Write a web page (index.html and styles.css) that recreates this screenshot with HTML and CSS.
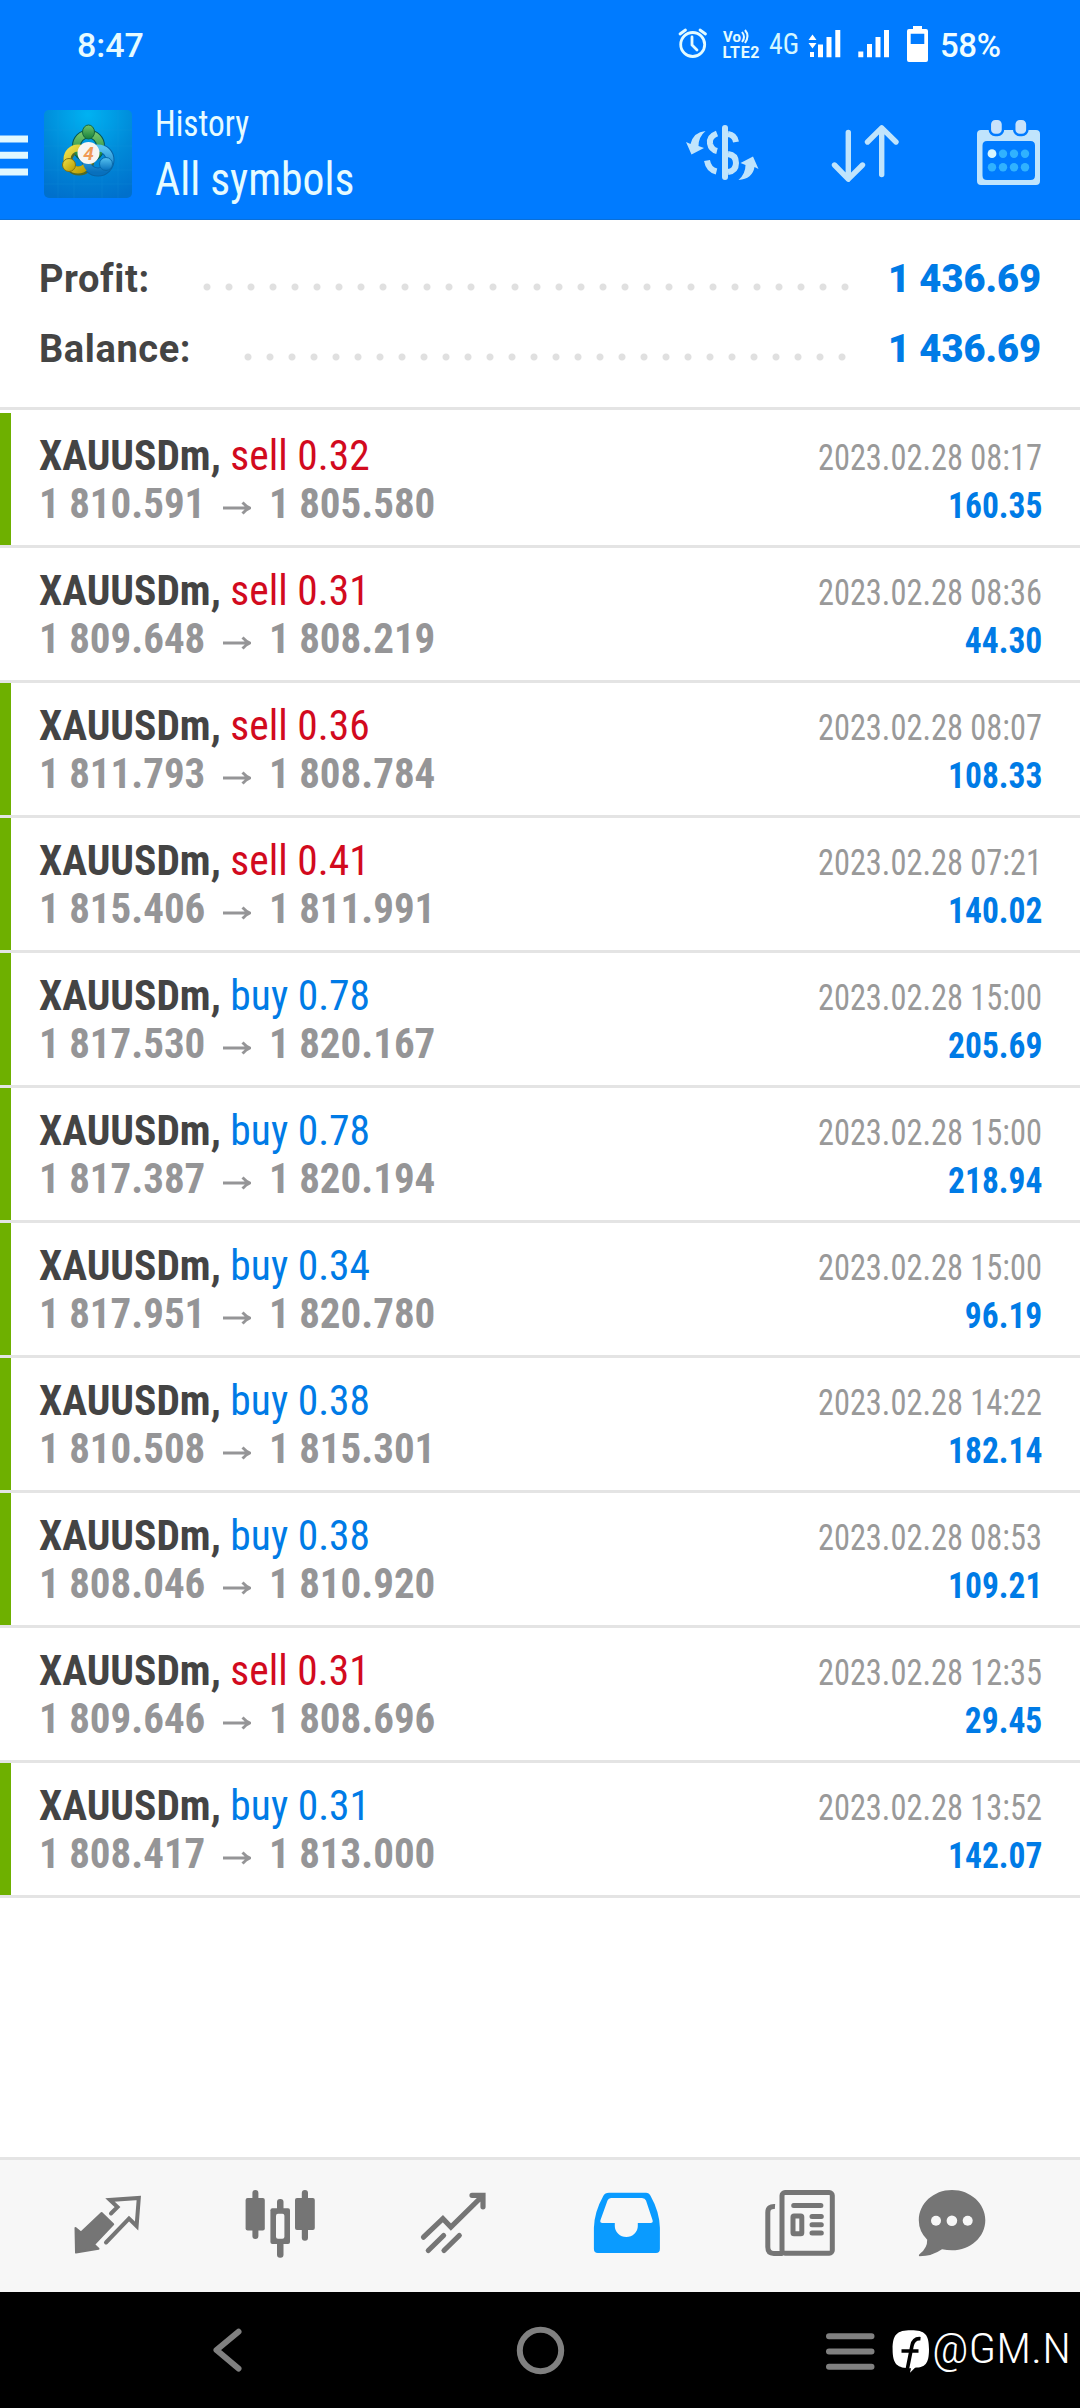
FILE: index.html
```html
<!DOCTYPE html>
<html lang="en">
<head>
<meta charset="utf-8">
<title>History</title>
<link rel="stylesheet" href="styles.css">
</head>
<body>
<header class="top">
  <div class="status">
    <span class="clock">8:47</span>
    <svg class="status-icons" viewBox="676 20 340 50" width="340" height="50">
      <g fill="none" stroke="#e4fbff" stroke-width="2.8" stroke-linecap="round">
        <circle cx="694.7" cy="44.5" r="12"/>
        <path d="M694 37v8l5 5M682 34l5.500-4M702 30l5.500 4"/>
      </g>
      <text x="725" y="42" font-size="15" font-weight="700" textLength="18" fill="#e4fbff">Vo</text>
      <path d="M744 32q4 5 0 10M747 30q5 6 0 13" fill="none" stroke="#e4fbff" stroke-width="2"/>
      <text x="724.500" y="57.500" font-size="16" font-weight="700" textLength="37" fill="#e4fbff">LTE2</text>
      <text class="cond" x="771" y="54" font-size="29" textLength="30" lengthAdjust="spacingAndGlyphs" fill="#d4f6ff">4G</text>
      <g fill="#fff">
        <path d="M810.500 40l4-5.500 4 5.500zM810.500 43l4 5.500 4-5.500zM812 52h4v5h-4zM820 44.500h5v12.800h-5zM828.500 37h5v20.300h-5zM837.300 30h5v27.300h-5z"/>
        <path d="M860.300 51.500h5v5.800h-5zM869 44h5v13.300h-5zM877.500 37h5v20.300h-5zM886 30h5v27.300h-5z"/>
        <path fill-rule="evenodd" d="M915 26h9v3h4q2 0 2 2v29q0 2-2 2h-17q-2 0-2-2v-29q0-2 2-2h4zM912.700 33.700v10.300h13.600v-10.300z"/>
      </g>
      <text x="942" y="57" font-size="33" font-weight="500" textLength="61" fill="#f0fdff">58%</text>
    </svg>
  </div>
  <div class="appbar">
    <svg class="burger" viewBox="0 0 28 42" width="28" height="42"><path d="M0 4h28M0 20.300h28M0 37h28" stroke="#e0f8ff" stroke-width="7"/></svg>
    <svg class="logo" viewBox="0 0 88 88" width="88" height="88">
      <defs>
        <radialGradient id="sky" cx=".5" cy=".05" r="1"><stop offset="0" stop-color="#00b2f2"/><stop offset=".55" stop-color="#0089d8"/><stop offset="1" stop-color="#0070cc"/></radialGradient>
        <linearGradient id="gr" x2="0" y2="1"><stop offset="0" stop-color="#72c46a"/><stop offset="1" stop-color="#14803c"/></linearGradient>
        <linearGradient id="ye" x2="1" y2="1"><stop offset="0" stop-color="#eee04a"/><stop offset="1" stop-color="#b79a00"/></linearGradient>
        <linearGradient id="bl" x2="0" y2="1"><stop offset="0" stop-color="#56c2f0"/><stop offset="1" stop-color="#0870bd"/></linearGradient>
      </defs>
      <rect width="88" height="88" rx="5" fill="url(#sky)"/>
      <path d="M14 0v88M30 0v88M58 0v88M74 0v88M0 20h88M0 36h88M0 60h88M0 74h88" stroke="#20a8ee" stroke-opacity=".15"/>
      <circle cx="44.500" cy="36" r="12" fill="none" stroke="#075650" stroke-width="9"/>
      <circle cx="35" cy="50" r="11" fill="none" stroke="#516a25" stroke-width="9"/>
      <circle cx="54" cy="50" r="12" fill="none" stroke="#0763a7" stroke-width="9"/>
      <circle cx="44.500" cy="36" r="12" fill="none" stroke="url(#gr)" stroke-width="7"/>
      <circle cx="34" cy="49" r="11" fill="none" stroke="url(#ye)" stroke-width="7"/>
      <circle cx="54" cy="50" r="12" fill="none" stroke="url(#bl)" stroke-width="7"/>
      <ellipse cx="44.500" cy="22" rx="6" ry="7" fill="url(#gr)" stroke="#17673c"/>
      <circle cx="25" cy="55" r="6.500" fill="url(#ye)" stroke="#827111"/>
      <circle cx="62" cy="54" r="6.500" fill="url(#bl)" stroke="#0869aa"/>
      <circle cx="44.500" cy="43" r="11" fill="#f7f5f2"/>
      <text x="44.500" y="50" font-size="19" font-weight="700" font-style="italic" text-anchor="middle" fill="#f09a56">4</text>
    </svg>
    <div class="titles">
      <div class="sub">History</div>
      <div class="main">All symbols</div>
    </div>
    <svg class="actions" viewBox="680 110 370 84" width="370" height="84">
      <g fill="none" stroke="#c0e4fc" stroke-width="6">
        <path d="M725 128v49" stroke-linecap="round"/>
        <path d="M717 133.500q-8 3-7 10 1 6 7 7.500M728 134q7 1 8 8M707 160.500q1.500 9 9.500 11M728 154q8 1 8 9t-8 9"/>
      </g>
      <path fill="#c0e4fc" d="M705.500 131q-12 1-15 13l-4.500-2 5.500 12.500 12.500-6.500-5.500-2q0-9 7-15zM738.500 180q14-1 16-13l4 2-5.500-12.500-12.500 6.500 5 2q0 9-7 15z"/>
      <g fill="none" stroke="#c0e4fc" stroke-width="5.400" stroke-linecap="round" stroke-linejoin="round">
        <path d="M848.300 132.500v46.500M834.500 165l13.800 14.200L862.500 165M881.700 174.500v-46.500M867.500 142l14.200-14.200L896 142"/>
      </g>
      <path fill="#c0e4fc" fill-rule="evenodd" d="M981 130h55q4 0 4 4v47q0 4-4 4h-55q-4 0-4-4v-47q0-4 4-4zM987 141q-4.500 0-4.500 4.500v30q0 4.500 4.500 4.500h43.500q4.500 0 4.500-4.500v-30q0-4.500-4.500-4.500z"/>
      <g fill="#c8e2fb" stroke="#007bff" stroke-width="2.500"><rect x="989.800" y="118.700" width="13.200" height="16.400" rx="5.500"/><rect x="1014.200" y="118.700" width="13.200" height="16.400" rx="5.500"/></g>
      <g fill="#30b2ff"><circle cx="1003" cy="153.700" r="4.200"/><circle cx="1014" cy="153.700" r="4.200"/><circle cx="1025" cy="153.700" r="4.200"/><circle cx="992" cy="167.300" r="4.200"/><circle cx="1003" cy="167.300" r="4.200"/><circle cx="1014" cy="167.300" r="4.200"/><circle cx="1025" cy="167.300" r="4.200"/></g>
      <circle cx="992" cy="153.700" r="4.400" fill="#d8f6ff"/>
    </svg>
  </div>
</header>

<section class="summary">
  <div class="total"><span class="label-profit">Profit:</span><i class="dots dots-profit"></i><b>1 436.69</b></div>
  <div class="total"><span class="label-balance">Balance:</span><i class="dots dots-balance"></i><b>1 436.69</b></div>
</section>

<main class="deals">
  <article class="deal tp"><div class="line"><span class="sym">XAUUSDm, <em class="sell">sell 0.32</em></span><time>2023.02.28 08:17</time></div><div class="line"><span class="price"><span>1 810.591</span><svg class="arrow"><use href="#arrow"/></svg><span>1 805.580</span></span><b>160.35</b></div></article>
  <article class="deal"><div class="line"><span class="sym">XAUUSDm, <em class="sell">sell 0.31</em></span><time>2023.02.28 08:36</time></div><div class="line"><span class="price"><span>1 809.648</span><svg class="arrow"><use href="#arrow"/></svg><span>1 808.219</span></span><b>44.30</b></div></article>
  <article class="deal tp"><div class="line"><span class="sym">XAUUSDm, <em class="sell">sell 0.36</em></span><time>2023.02.28 08:07</time></div><div class="line"><span class="price"><span>1 811.793</span><svg class="arrow"><use href="#arrow"/></svg><span>1 808.784</span></span><b>108.33</b></div></article>
  <article class="deal tp"><div class="line"><span class="sym">XAUUSDm, <em class="sell">sell 0.41</em></span><time>2023.02.28 07:21</time></div><div class="line"><span class="price"><span>1 815.406</span><svg class="arrow"><use href="#arrow"/></svg><span>1 811.991</span></span><b>140.02</b></div></article>
  <article class="deal tp"><div class="line"><span class="sym">XAUUSDm, <em>buy 0.78</em></span><time>2023.02.28 15:00</time></div><div class="line"><span class="price"><span>1 817.530</span><svg class="arrow"><use href="#arrow"/></svg><span>1 820.167</span></span><b>205.69</b></div></article>
  <article class="deal tp"><div class="line"><span class="sym">XAUUSDm, <em>buy 0.78</em></span><time>2023.02.28 15:00</time></div><div class="line"><span class="price"><span>1 817.387</span><svg class="arrow"><use href="#arrow"/></svg><span>1 820.194</span></span><b>218.94</b></div></article>
  <article class="deal tp"><div class="line"><span class="sym">XAUUSDm, <em>buy 0.34</em></span><time>2023.02.28 15:00</time></div><div class="line"><span class="price"><span>1 817.951</span><svg class="arrow"><use href="#arrow"/></svg><span>1 820.780</span></span><b>96.19</b></div></article>
  <article class="deal tp"><div class="line"><span class="sym">XAUUSDm, <em>buy 0.38</em></span><time>2023.02.28 14:22</time></div><div class="line"><span class="price"><span>1 810.508</span><svg class="arrow"><use href="#arrow"/></svg><span>1 815.301</span></span><b>182.14</b></div></article>
  <article class="deal tp"><div class="line"><span class="sym">XAUUSDm, <em>buy 0.38</em></span><time>2023.02.28 08:53</time></div><div class="line"><span class="price"><span>1 808.046</span><svg class="arrow"><use href="#arrow"/></svg><span>1 810.920</span></span><b>109.21</b></div></article>
  <article class="deal"><div class="line"><span class="sym">XAUUSDm, <em class="sell">sell 0.31</em></span><time>2023.02.28 12:35</time></div><div class="line"><span class="price"><span>1 809.646</span><svg class="arrow"><use href="#arrow"/></svg><span>1 808.696</span></span><b>29.45</b></div></article>
  <article class="deal tp"><div class="line"><span class="sym">XAUUSDm, <em>buy 0.31</em></span><time>2023.02.28 13:52</time></div><div class="line"><span class="price"><span>1 808.417</span><svg class="arrow"><use href="#arrow"/></svg><span>1 813.000</span></span><b>142.07</b></div></article>
</main>

<nav class="tabs">
  <svg viewBox="22 0 173 132" width="173" height="132">
    <path fill="#757575" stroke="#757575" stroke-width="2" stroke-linejoin="round" d="M102.600 53l11.600 11.200L95 84.600l4.500 4.200L77 92.500 76.500 68l5.500 4.500z"/>
    <path fill="none" stroke="#757575" stroke-width="4" stroke-linecap="round" d="M112 53.500l6.500-6.500-7.500-7L139.800 38l-2.200 28-7.600-7.500L107 82.500"/>
  </svg>
  <svg viewBox="195 0 173 132" width="173" height="132">
    <g fill="#757575"><rect x="246.600" y="38" width="19.200" height="32.500" rx="2"/><rect x="253.400" y="30" width="6" height="49" rx="3"/><rect x="296" y="38" width="19.800" height="32" rx="2"/><rect x="302.800" y="30" width="6.200" height="50.700" rx="3"/><rect x="278" y="39" width="6.500" height="58.700" rx="3"/><rect x="271.400" y="48.300" width="19.600" height="35.700" rx="2"/></g>
    <rect x="277" y="53.700" width="8.400" height="25" rx="2" fill="#f7f7f7"/>
  </svg>
  <svg viewBox="368 0 173 132" width="173" height="132">
    <path fill="none" stroke="#757575" stroke-width="5.200" stroke-linecap="round" d="M424.500 77.200l19.400-18.500 8 8.300L484 35.500M473 35.300h11v11.500M429.300 90.500l15.300-15M445 90.500l15.300-15"/>
  </svg>
  <svg viewBox="541 0 173 132" width="173" height="132">
    <path fill="#0a9bff" fill-rule="evenodd" d="M610 32.700h37q3 0 4.500 3 9 16 9.400 32v21q0 4.300-4 4.300h-58q-4 0-4-4.300v-21q.5-16 9.500-32 1.500-3 5.600-3zM612 38q-2.500 0-3.500 2.500l-7 19.500q-1 3 2 3h12.300v3a11.500 11 0 0 0 23 0v-3h12.700q3 0 2-3l-6.500-19.500q-1-2.500-4-2.500z"/>
  </svg>
  <svg viewBox="714 0 173 132" width="173" height="132">
    <g fill="none" stroke="#757575" stroke-width="5">
      <rect x="783" y="32.600" width="50.300" height="60.600" rx="3"/>
      <path d="M776 46.500q-7.200-.5-7.200 6V87q0 6.400 6 6.400h9"/>
      <rect x="794" y="56" width="8.800" height="17.700" rx="1"/>
      <path stroke-linecap="round" d="M794.700 45.500h27.200M813 56.500h9.300M813 64.800h9.300M813 73h9.300"/>
    </g>
  </svg>
  <svg viewBox="887 0 173 132" width="173" height="132">
    <path fill="#757575" d="M953 30c18.500 0 33.300 13.500 33.300 30.200S971.500 90.300 953 90.300q-5 0-10-1-10 7-22.500 7-1.500-1 .5-2.500 7.500-6 7.200-14-8.400-8.500-8.400-19.600C919.800 43.500 934.500 30 953 30z"/>
    <g fill="#f7f7f7"><circle cx="937" cy="60.700" r="5"/><circle cx="952.900" cy="60.700" r="5.300"/><circle cx="968.700" cy="60.700" r="5"/></g>
  </svg>
</nav>

<footer class="sys">
  <svg viewBox="0 0 930 116" width="930" height="116">
    <g fill="none" stroke="#808080" stroke-width="6" stroke-linecap="round" stroke-linejoin="round">
      <path d="M238.500 39.700L216.500 58l22 18.500M829 44.300h42.500M829 59.500h42.500M829 74.800h42.500"/>
      <circle cx="540.500" cy="58.500" r="20.700"/>
    </g>
    <path fill="#fff" d="M911 38.300c14 0 18 4 18 19s-4 18-14 18.500l-5 5 1-4.500c-14 0-18.400-4-18.400-19s4.400-19 18.400-19z"/>
    <path fill="none" stroke="#000" stroke-width="3.600" d="M920.500 46.700q-7-.7-8.500 7l-4.800 24M901.500 59h17"/>
  </svg>
  <span class="handle">@GM.N</span>
</footer>

<svg class="sprite" width="0" height="0"><symbol id="arrow" viewBox="0 0 28 14"><path d="M0 7h26M19.500 1.500Q23 5.500 27 7q-4 1.500-7.500 5.500" fill="none" stroke="#959597" stroke-width="2.800"/></symbol></svg>
</body>
</html>
```

FILE: styles.css
```css
* { box-sizing: border-box; }
body {
  margin: 0;
  width: 1080px;
  height: 2408px;
  display: flex;
  flex-direction: column;
  background: #fff;
  font-family: Roboto, sans-serif;
  overflow: hidden;
}
svg { display: block; flex: none; }
svg text { font-family: Roboto, sans-serif; }
.top { height: 220px; background: #007bff; border-bottom: 1px solid #0a6fd8; color: #e6fbff; flex: none; }
.status { height: 90px; padding: 20px 66px 20px 77px; display: flex; justify-content: space-between; }
.clock { font-size: 34px; font-weight: 500; line-height: 50px; }
.appbar { display: flex; align-items: flex-start; }
.burger { margin-top: 45px; }
.logo { margin: 20px 0 0 16px; }
.titles, .cond, .deal, .handle { font-family: "Roboto Condensed", Roboto, sans-serif; font-stretch: 75%; }
.titles { margin: 11px 0 0 23px; width: 360px; white-space: nowrap; }
.sub { font-size: 36px; line-height: 46px; transform: scaleX(.925); transform-origin: left; }
.main { font-size: 47px; line-height: 64px; transform: scaleX(.928); transform-origin: left; }
.actions { margin: 20px 0 0 165px; }

.summary { height: 190px; padding: 24px 39px 0 39px; border-bottom: 3px solid #e4e4e4; flex: none; }
.total { display: flex; height: 70px; line-height: 70px; font-size: 38px; font-weight: 700; color: #444; }
.total span { letter-spacing: .6px; }
.total b { color: #007be6; margin-left: auto; }
.label-profit { width: 157px; }
.label-balance { width: 198px; }
.dots { height: 8px; margin-top: 38.500px; background: radial-gradient(circle at 11px 4px, #e0e0e0 3px, transparent 4px) 0 0 / 22px 8px; }
.dots-profit { width: 660px; }
.dots-balance { width: 616px; }

.deals { padding-top: 3px; flex: 1; }
.deal { height: 135px; padding: 18px 38px 0 39px; border-bottom: 3px solid #e4e4e4; }
.tp { background: linear-gradient(#6eb000, #6eb000) 0 0 / 11px 132px no-repeat; }
.line { display: flex; justify-content: space-between; align-items: baseline; height: 48px; line-height: 48px; }
.sym { font-size: 43px; font-weight: 700; color: #444; transform: scaleX(.965); transform-origin: left; }
.sym em { font-style: normal; font-weight: 400; color: #007be6; }
.sym .sell { color: #d20a1e; }
.line time { font-size: 36px; color: #999; transform: scaleX(.9); transform-origin: right; }
.price { font-size: 43px; font-weight: 700; color: #959597; display: flex; align-items: center; }
.price span { width: 184px; transform: scaleX(.953); transform-origin: left; }
.arrow { width: 28px; height: 14px; margin: 9px 18px 0 0; }
.line b { font-size: 36px; color: #007be6; transform: scaleX(.93); transform-origin: right; }

.tabs { height: 135px; border-top: 3px solid #e4e4e4; background: #f7f7f7; padding-left: 21px; display: flex; flex: none; }
.sys { height: 116px; background: #000; display: flex; flex: none; }
.handle { color: #fff; font-size: 42px; font-weight: 300; line-height: 114px; margin-left: 2px; transform: scaleX(1.11); transform-origin: left; }
.sprite { position: absolute; }
```
